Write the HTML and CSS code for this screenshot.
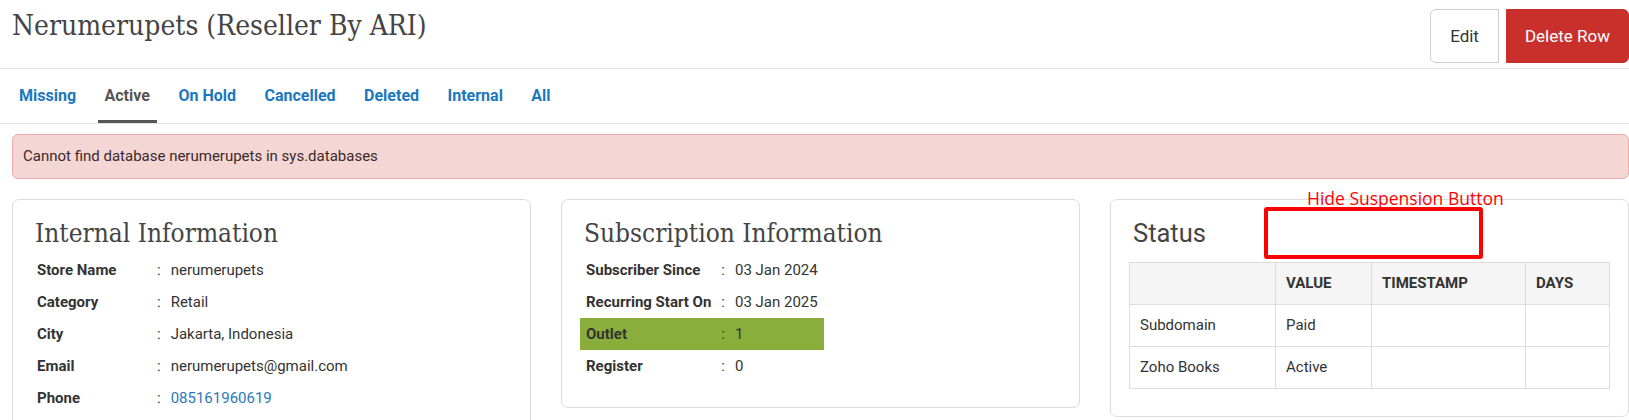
FILE: index.html
```html
<!DOCTYPE html>
<html lang="en">
<head>
<meta charset="UTF-8">
<meta name="viewport" content="width=device-width, initial-scale=1.0">
<title>Nerumerupets (Reseller By ARI)</title>
<link rel="stylesheet" href="styles.css">
</head>
<body>
<div class="page-header">
  <h1 class="page-title">Nerumerupets (Reseller By ARI)</h1>
  <div class="header-actions">
    <button class="btn btn-edit">Edit</button>
    <button class="btn btn-delete">Delete Row</button>
  </div>
</div>
<ul class="tabs">
  <li><a href="#">Missing</a></li>
  <li class="active"><a href="#">Active</a></li>
  <li><a href="#">On Hold</a></li>
  <li><a href="#">Cancelled</a></li>
  <li><a href="#">Deleted</a></li>
  <li><a href="#">Internal</a></li>
  <li><a href="#">All</a></li>
</ul>
<div class="content">
  <div class="alert">Cannot find database nerumerupets in sys.databases</div>
  <div class="cards">
    <div class="card">
      <h2 class="card-title">Internal Information</h2>
      <table class="info-table fixed-label">
        <tr><td class="label">Store Name</td><td class="colon">:</td><td>nerumerupets</td></tr>
        <tr><td class="label">Category</td><td class="colon">:</td><td>Retail</td></tr>
        <tr><td class="label">City</td><td class="colon">:</td><td>Jakarta, Indonesia</td></tr>
        <tr><td class="label">Email</td><td class="colon">:</td><td>nerumerupets@gmail.com</td></tr>
        <tr><td class="label">Phone</td><td class="colon">:</td><td><a class="phone" href="#">085161960619</a></td></tr>
      </table>
    </div>
    <div class="card">
      <h2 class="card-title">Subscription Information</h2>
      <table class="info-table">
        <tr><td class="label">Subscriber Since</td><td class="colon">:</td><td>03 Jan 2024</td></tr>
        <tr><td class="label">Recurring Start On</td><td class="colon">:</td><td>03 Jan 2025</td></tr>
        <tr class="highlight"><td class="label">Outlet</td><td class="colon">:</td><td>1</td></tr>
        <tr><td class="label">Register</td><td class="colon">:</td><td>0</td></tr>
      </table>
    </div>
    <div class="card status-card">
      <h2 class="status-title">Status</h2>
      <table class="status-table">
        <thead>
          <tr>
            <th class="col-name"></th>
            <th class="col-value">Value</th>
            <th class="col-time">Timestamp</th>
            <th>Days</th>
          </tr>
        </thead>
        <tbody>
          <tr><td>Subdomain</td><td>Paid</td><td></td><td></td></tr>
          <tr><td>Zoho Books</td><td>Active</td><td></td><td></td></tr>
        </tbody>
      </table>
      <div class="note-box"></div>
      <div class="note-label">Hide Suspension Button</div>
    </div>
  </div>
</div>
</body>
</html>
```

FILE: styles.css
```css
body { margin: 0; font-family: Roboto, "Liberation Sans", sans-serif; font-size: 15px; color: #333; background: #fff; }

.page-header { display: flex; justify-content: space-between; align-items: flex-start; padding: 9px 0 5px 12px; border-bottom: 1px solid #e3e3e3; }
.page-title { margin: 0; font-family: "DejaVu Serif Condensed", "DejaVu Serif", serif; font-weight: normal; font-size: 28px; line-height: 34px; color: #444; }
.header-actions { display: flex; gap: 7px; }
.btn { height: 54px; padding: 0 19px; font-family: Roboto, sans-serif; font-size: 17px; border: 1px solid; cursor: pointer; }
.btn-edit { background: #fff; border-color: #ccc; color: #333; border-radius: 6px 0 0 6px; }
.btn-delete { background: #c9302c; border-color: #c9302c; color: #fff; padding: 0 18px; border-radius: 0 6px 6px 0; }

.tabs { display: flex; gap: 14.5px; list-style: none; margin: 0; padding: 0 0 0 12px; border-bottom: 1px solid #e3e3e3; }
.tabs a { display: block; padding: 3px 7px 0; line-height: 48px; border-bottom: 3px solid transparent; font-size: 16px; font-weight: 700; color: #1b78be; text-decoration: none; }
.tabs .active a { color: #555; border-bottom-color: #555; }

.content { padding: 10px 0 0 12px; }
.alert { padding: 11px 10px; line-height: 21px; background: #f4d6d5; border: 1px solid #eba9a9; border-radius: 6px; color: #3b2a2a; }

.cards { display: grid; grid-template-columns: repeat(3, 1fr); gap: 30px; margin-top: 20px; align-items: start; }
.card { position: relative; border: 1px solid #dcdcdc; border-radius: 7px; padding: 18px 18px 25px; }
.card-title { margin: 0 0 6px; padding-left: 4px; font-family: "DejaVu Serif Condensed", "DejaVu Serif", serif; font-weight: normal; font-size: 26px; line-height: 30px; color: #444; }

.info-table { border-collapse: collapse; }
.info-table td { height: 32px; padding: 0 6px; white-space: nowrap; }
.info-table .label { font-weight: 700; }
.info-table .colon { padding: 0 4px; }
.fixed-label .label { width: 110px; }
.highlight td { background: #8aae3c; }
.phone { color: #2a79b8; text-decoration: none; }

.status-card { padding-bottom: 27px; }
.status-title { margin: 0 0 14px; padding-left: 4px; font-size: 25.5px; font-weight: normal; line-height: 30px; color: #444; }
.status-table { width: 100%; border-collapse: collapse; table-layout: fixed; }
.status-table th, .status-table td { box-sizing: border-box; border: 1px solid #ddd; padding: 10px; line-height: 21px; text-align: left; }
.status-table th { background: #f5f5f5; font-weight: 700; text-transform: uppercase; }
.col-name { width: 146px; }
.col-value { width: 96px; }
.col-time { width: 154px; }

.note-box { position: absolute; left: 153px; top: 7px; width: 219px; height: 52px; box-sizing: border-box; border: 4px solid #f00; border-radius: 3px; }
.note-label { position: absolute; left: 196px; top: -12px; font-family: "Open Sans", sans-serif; font-size: 17.5px; line-height: 20px; color: #f00; white-space: nowrap; }
```
